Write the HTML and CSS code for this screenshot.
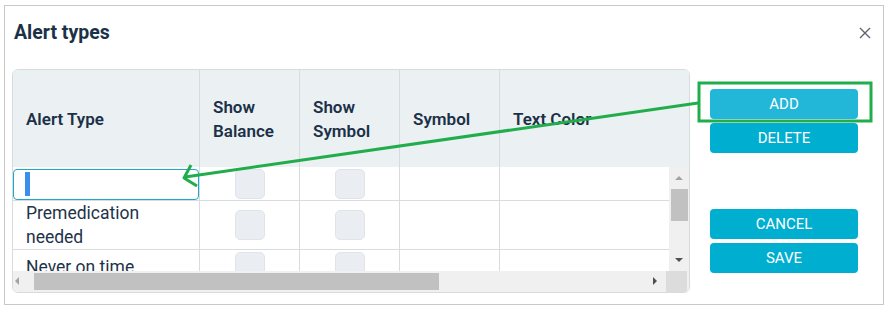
FILE: index.html
```html
<!DOCTYPE html>
<html lang="en">
<head>
    <meta charset="UTF-8">
    <title>Alert types</title>
    <link rel="stylesheet" href="styles.css">
</head>
<body>
    <div class="dialog">
        <div class="dialog-header">
            <h2>Alert types</h2>
            <span class="close">
                <svg width="12" height="12" viewBox="0 0 12 12"><path d="M1 1L11 11M11 1L1 11" stroke="#5c6670" stroke-width="1.4"/></svg>
            </span>
        </div>

        <div class="main">
            <div class="grid">
                <div class="grid-head">
                    <div class="cell">Alert Type</div>
                    <div class="cell">Show<br>Balance</div>
                    <div class="cell">Show<br>Symbol</div>
                    <div class="cell">Symbol</div>
                    <div class="cell last">Text Color</div>
                </div>

                <div class="grid-body">
                    <div class="rows">
                        <div class="row">
                            <div class="cell"><div class="edit"><span class="caret"></span></div></div>
                            <div class="cell center"><span class="check"></span></div>
                            <div class="cell center"><span class="check"></span></div>
                            <div class="cell"></div>
                            <div class="cell last"></div>
                        </div>
                        <div class="row">
                            <div class="cell text">Premedication<br>needed</div>
                            <div class="cell center"><span class="check"></span></div>
                            <div class="cell center"><span class="check"></span></div>
                            <div class="cell"></div>
                            <div class="cell last"></div>
                        </div>
                        <div class="row">
                            <div class="cell text">Never on time</div>
                            <div class="cell center"><span class="check"></span></div>
                            <div class="cell center"><span class="check"></span></div>
                            <div class="cell"></div>
                            <div class="cell last"></div>
                        </div>
                    </div>
                    <div class="vscroll">
                        <span class="arrow up"></span>
                        <span class="vthumb"></span>
                        <span class="arrow down"></span>
                    </div>
                </div>

                <div class="hscroll">
                    <span class="arrow left"></span>
                    <span class="hthumb"></span>
                    <span class="arrow right"></span>
                    <span class="corner"></span>
                </div>
            </div>

            <div class="actions">
                <div class="group">
                    <button class="btn hover">ADD</button>
                    <button class="btn">DELETE</button>
                </div>
                <div class="group">
                    <button class="btn">CANCEL</button>
                    <button class="btn">SAVE</button>
                </div>
            </div>
        </div>
    </div>

    <!-- annotation drawn over the screenshot -->
    <svg class="annotation" width="890" height="313" viewBox="0 0 890 313">
        <rect x="699" y="83" width="172" height="38" fill="none" stroke="#22ad4c" stroke-width="3"/>
        <path d="M698 103L185 177" stroke="#22ad4c" stroke-width="3" fill="none"/>
        <path d="M191 165L184 178L197 186" stroke="#22ad4c" stroke-width="3" fill="none" stroke-linejoin="round"/>
    </svg>
</body>
</html>
```

FILE: styles.css
```css
body {
    margin: 0;
    padding: 5px 0 0 4px;
    background: #fff;
    font-family: Roboto, "Liberation Sans", sans-serif;
    color: #1d3349;
}

.dialog {
    width: 880px;
    height: 300px;
    box-sizing: border-box;
    border: 1px solid #c9c9c9;
    background: #fff;
}

.dialog-header {
    position: relative;
    height: 63px;
    box-sizing: border-box;
    padding: 14px 0 0 9px;
}

.dialog-header h2 {
    margin: 0;
    font-size: 19.5px;
    line-height: 26px;
    font-weight: 700;
    color: #1b3148;
}

.close {
    position: absolute;
    right: 12px;
    top: 18px;
}

.main {
    display: flex;
    gap: 20px;
    padding-left: 7px;
}

.grid {
    width: 678px;
    height: 224px;
    box-sizing: border-box;
    border: 1px solid #d6dbdf;
    border-radius: 6px;
    overflow: hidden;
    display: flex;
    flex-direction: column;
}

.grid-head {
    height: 97px;
    flex: none;
    display: grid;
    grid-template-columns: 187px 100px 100px 100px 1fr;
    background: #ebf0f3;
}

.grid-head .cell {
    display: flex;
    align-items: center;
    padding: 0 0 0 13px;
    font-size: 17px;
    line-height: 24px;
    font-weight: 600;
    color: #1b3148;
}

.cell {
    box-sizing: border-box;
    border-right: 1px solid #d8dcdf;
}

.cell.last {
    border-right: none;
}

.grid-body {
    height: 104px;
    flex: none;
    display: flex;
    overflow: hidden;
}

.rows {
    width: 656px;
    flex: none;
}

.row {
    display: grid;
    grid-template-columns: 187px 100px 100px 100px 1fr;
    min-height: 33px;
    border-bottom: 1px solid #d8dcdf;
}

.row .cell.text {
    display: flex;
    align-items: center;
    padding-left: 13px;
    font-size: 17.5px;
    line-height: 24px;
    color: #1d3349;
}

.row .cell.center {
    display: flex;
    align-items: center;
    justify-content: center;
}

.check {
    width: 28px;
    height: 28px;
    border: 1px solid #e0e4ea;
    border-radius: 5px;
    background: #eaedf1;
    margin-left: 1px;
}

.edit {
    width: 186px;
    height: 31px;
    margin-top: 2px;
    box-sizing: border-box;
    border: 1px solid #1ca9cc;
    border-radius: 4px;
    background: #fff;
    padding: 2px 0 0 11px;
}

.caret {
    display: block;
    width: 5px;
    height: 24px;
    background: #3b8eea;
}

.vscroll {
    width: 20px;
    flex: none;
    background: #f0f0f0;
    position: relative;
}

.vthumb {
    position: absolute;
    left: 2px;
    top: 22px;
    width: 17px;
    height: 32px;
    background: #c1c1c1;
}

.arrow {
    position: absolute;
    width: 0;
    height: 0;
    border: 4px solid transparent;
}

.arrow.up {
    left: 6px;
    top: 9px;
    border-bottom: 4px solid #a3a3a3;
    border-top: none;
}

.arrow.down {
    left: 6px;
    bottom: 9px;
    border-top: 4px solid #505050;
    border-bottom: none;
}

.hscroll {
    height: 21px;
    flex: none;
    background: #f0f0f0;
    position: relative;
}

.hthumb {
    position: absolute;
    left: 21px;
    top: 2px;
    width: 405px;
    height: 17px;
    background: #c1c1c1;
}

.arrow.left {
    left: 2px;
    top: 6px;
    border-right: 4px solid #a3a3a3;
    border-left: none;
}

.arrow.right {
    left: 640px;
    top: 6px;
    border-left: 4px solid #505050;
    border-right: none;
}

.corner {
    position: absolute;
    left: 653px;
    top: 0;
    width: 21px;
    height: 21px;
    background: #dcdcdc;
}

.actions {
    padding-top: 20px;
    display: flex;
    flex-direction: column;
    gap: 56px;
}

.group {
    display: flex;
    flex-direction: column;
    gap: 4px;
}

.btn {
    width: 148px;
    height: 30px;
    border: none;
    border-radius: 4px;
    background: #00aecf;
    color: #fff;
    font-family: Roboto, "Liberation Sans", sans-serif;
    font-size: 15px;
    padding: 0;
}

.btn.hover {
    background: #22b6d9;
}

.annotation {
    position: absolute;
    left: 0;
    top: 0;
    pointer-events: none;
}
```
